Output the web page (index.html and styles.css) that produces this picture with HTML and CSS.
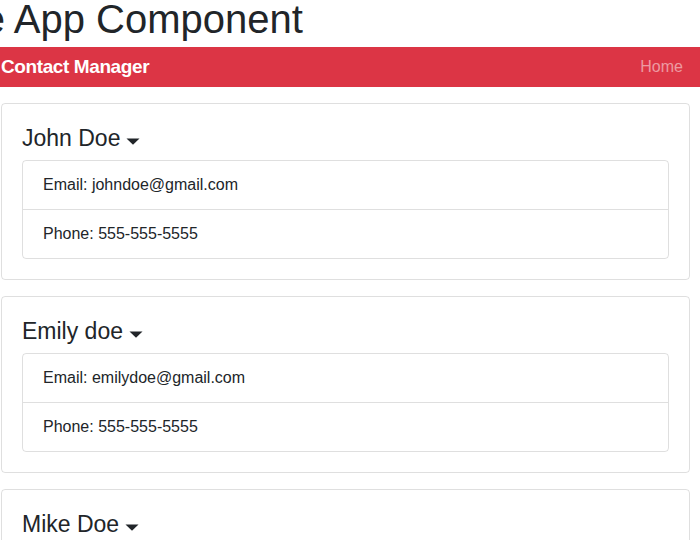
FILE: index.html
```html
<!DOCTYPE html>
<html>
<head>
<meta charset="utf-8">
<link rel="stylesheet" href="styles.css">
</head>
<body>
<h1 class="title">The App Component</h1>
<nav class="navbar">
  <a class="brand">Contact Manager</a>
  <a class="nav-link">Home</a>
</nav>
<div class="contacts">
  <div class="card">
    <h4 class="name">John Doe <svg class="caret" width="14" height="7" viewBox="0 0 14 7"><path d="M0.5 0.5 H13.5 L7 6.8 Z" fill="#212529"/></svg></h4>
    <ul class="list">
      <li class="item">Email: johndoe@gmail.com</li>
      <li class="item">Phone: 555-555-5555</li>
    </ul>
  </div>
  <div class="card">
    <h4 class="name">Emily doe <svg class="caret" width="14" height="7" viewBox="0 0 14 7"><path d="M0.5 0.5 H13.5 L7 6.8 Z" fill="#212529"/></svg></h4>
    <ul class="list">
      <li class="item">Email: emilydoe@gmail.com</li>
      <li class="item">Phone: 555-555-5555</li>
    </ul>
  </div>
  <div class="card">
    <h4 class="name">Mike Doe <svg class="caret" width="14" height="7" viewBox="0 0 14 7"><path d="M0.5 0.5 H13.5 L7 6.8 Z" fill="#212529"/></svg></h4>
    <ul class="list">
      <li class="item">Email: mikedoe@gmail.com</li>
      <li class="item">Phone: 555-555-5555</li>
    </ul>
  </div>
</div>
</body>
</html>
```
FILE: styles.css
```css
html, body {
  margin: 0;
  padding: 0;
  overflow: hidden;
  background: #fff;
  color: #212529;
  font-family: "Liberation Sans", Arial, sans-serif;
  font-size: 16px;
  line-height: 1.5;
}
.title {
  font-size: 40px;
  font-weight: 400;
  line-height: 48px;
  margin: -5px 0 4px -64px;
  white-space: nowrap;
}
.navbar {
  height: 40px;
  background: #dc3545;
  display: flex;
  align-items: center;
  justify-content: space-between;
  padding: 0 17px 0 1px;
}
.brand {
  color: #fff;
  font-size: 19px;
  font-weight: 700;
  letter-spacing: -0.4px;
}
.nav-link {
  color: rgba(255, 255, 255, 0.5);
  font-size: 16px;
}
.contacts {
  padding: 16px 10px 0 1px;
  display: flex;
  flex-direction: column;
  gap: 16px;
}
.card {
  border: 1px solid rgba(0, 0, 0, 0.125);
  border-radius: 4px;
  padding: 20px;
}
.name {
  font-size: 23px;
  font-weight: 400;
  line-height: 28px;
  margin: 0 0 8px;
  display: flex;
  align-items: center;
}
.caret {
  margin-left: 6px;
  margin-top: 6px;
}
.list {
  list-style: none;
  margin: 0;
  padding: 0;
  border: 1px solid rgba(0, 0, 0, 0.125);
  border-radius: 4px;
}
.item {
  padding: 12px 20px;
  line-height: 24px;
}
.item + .item {
  border-top: 1px solid rgba(0, 0, 0, 0.125);
}
```
